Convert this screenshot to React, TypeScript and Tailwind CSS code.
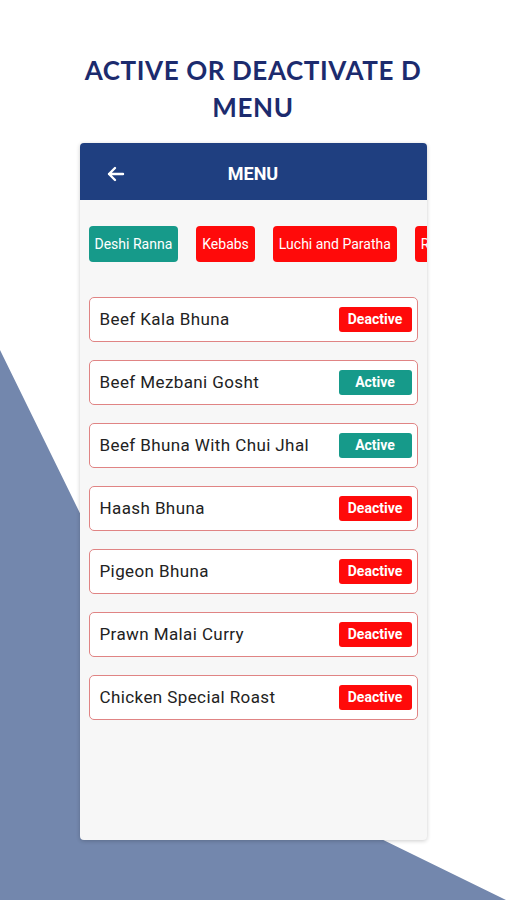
import React from "react";

const chips = [
  { name: "Deshi Ranna", active: true },
  { name: "Kebabs", active: false },
  { name: "Luchi and Paratha", active: false },
  { name: "Rice", active: false },
];

const items = [
  { name: "Beef Kala Bhuna", active: false },
  { name: "Beef Mezbani Gosht", active: true },
  { name: "Beef Bhuna With Chui Jhal", active: true },
  { name: "Haash Bhuna", active: false },
  { name: "Pigeon Bhuna", active: false },
  { name: "Prawn Malai Curry", active: false },
  { name: "Chicken Special Roast", active: false },
];

export default function App() {
  return (
    <div className="relative w-[506px] h-[900px] bg-white overflow-hidden" style={{ fontFamily: "Roboto, 'Liberation Sans', sans-serif" }}>
      <svg className="absolute inset-0" width="506" height="900" viewBox="0 0 506 900">
        <polygon points="0,350 195,748 506,900 0,900" fill="#7387ad" />
      </svg>
      <div className="relative flex flex-col items-center">
        <h1
          className="mt-[52px] text-center text-[#1c2b6e] text-[26px] leading-[37px] font-bold tracking-[0.6px] w-[380px]"
          style={{ fontFamily: "Lato, 'Noto Sans', sans-serif" }}
        >
          ACTIVE OR DEACTIVATE D<br />MENU
        </h1>
        <div className="mt-[17px] w-[347px] h-[697px] bg-[#f7f7f7] rounded-[4px] shadow-[0_1px_4px_rgba(0,0,0,0.2)] overflow-hidden flex flex-col">
          <div className="h-[57px] bg-[#1f3f80] flex items-center pt-[4px] px-[27px] relative">
            <svg width="18" height="16" viewBox="0 0 18 16" fill="none" stroke="white" strokeWidth="2.4" strokeLinecap="round" strokeLinejoin="round">
              <path d="M16 8H2M8 2L2 8l6 6" />
            </svg>
            <div className="absolute inset-0 pt-[4px] flex items-center justify-center text-white text-[18px] font-bold">MENU</div>
          </div>
          <div className="flex gap-[18px] pl-[9px] mt-[26px] whitespace-nowrap">
            {chips.map((c) => (
              <div
                key={c.name}
                className={`h-[36px] px-[6px] rounded-[4px] flex items-center text-white text-[14px] ${c.active ? "bg-[#169a8a]" : "bg-[#ff0a0a]"}`}
              >
                {c.name}
              </div>
            ))}
          </div>
          <div className="flex flex-col gap-[18px] mt-[35px] px-[9px]">
            {items.map((it) => (
              <div key={it.name} className="h-[45px] bg-white border border-[#e08484] rounded-[5px] flex items-center justify-between pl-[10px] pr-[5px]">
                <span className="text-[17px] tracking-[0.4px] text-[#222]">{it.name}</span>
                <span
                  className={`w-[73px] h-[25px] rounded-[3px] flex items-center justify-center text-white text-[14px] font-bold ${it.active ? "bg-[#169a8a]" : "bg-[#ff0a0a]"}`}
                >
                  {it.active ? "Active" : "Deactive"}
                </span>
              </div>
            ))}
          </div>
        </div>
      </div>
    </div>
  );
}
